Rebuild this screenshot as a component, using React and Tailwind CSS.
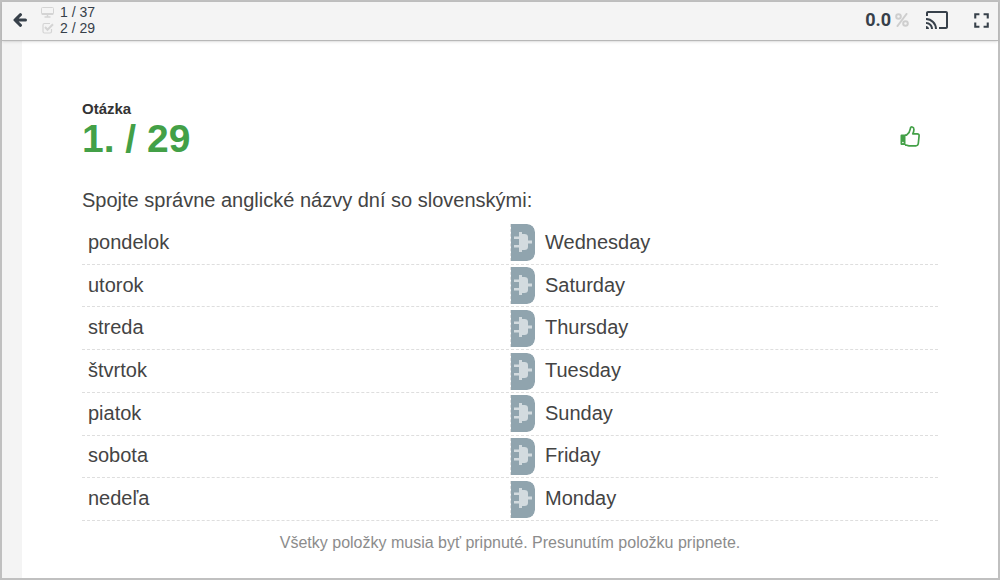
import { MdCast, MdFullscreen } from 'react-icons/md';

const pairs = [
  ['pondelok', 'Wednesday'],
  ['utorok', 'Saturday'],
  ['streda', 'Thursday'],
  ['štvrtok', 'Tuesday'],
  ['piatok', 'Sunday'],
  ['sobota', 'Friday'],
  ['nedeľa', 'Monday'],
];

function BackIcon() {
  return (
    <svg width="14" height="14" viewBox="0 0 14 14" fill="none" stroke="currentColor" strokeWidth="3">
      <path d="M7.500 1.700 2 7l5.500 5.300M3 7h9.500" strokeLinecap="round" strokeLinejoin="round" />
    </svg>
  );
}

function ScreenIcon() {
  return (
    <svg width="14" height="11" viewBox="0 0 14 11" fill="none" stroke="currentColor">
      <rect x=".5" y=".5" width="12" height="7" rx="1" />
      <path d="M1 7h11" strokeWidth="2" />
      <path d="M6.500 8v2M3.500 10h6" strokeWidth="1.500" />
    </svg>
  );
}

function CheckIcon() {
  return (
    <svg width="14" height="12" viewBox="0 0 14 12" fill="none" stroke="currentColor">
      <path
        d="M10.500 7v2.500a1.500 1.500 0 0 1-1.500 1.500H3.500A1.500 1.500 0 0 1 2 9.500V3a1.500 1.500 0 0 1 1.500-1.500H9"
        strokeWidth="1.200"
      />
      <path d="m4 5 2.500 2.700L12 2.200" strokeWidth="2" />
    </svg>
  );
}

function PercentIcon() {
  return (
    <svg width="14" height="14" viewBox="0 0 14 14" fill="none" stroke="currentColor" strokeWidth="2">
      <circle cx="3.500" cy="3.500" r="2.300" />
      <circle cx="10.500" cy="10.500" r="2.300" />
      <path d="m11.500 1-9 12" strokeLinecap="round" />
    </svg>
  );
}

function ThumbIcon() {
  return (
    <svg width="20" height="21" viewBox="0 0 20 21" fill="none" stroke="currentColor" strokeWidth="1.700">
      <path
        d="M5 9.200h1.500C8.500 7.500 10 5.500 10.300 2.800c.2-1.500 1-2.100 2-1.800 2.200.6 2 3.600.5 6.800h4.400c1.300 0 2 .8 1.900 2l-.8 7.700c-.2 1.500-1 2.300-2.500 2.300H9c-1.500 0-2.500-.8-4-1"
        strokeLinejoin="round"
      />
      <path
        d="M1.500 8.500h4V19h-4a1 1 0 0 1-1-1V9.500a1 1 0 0 1 1-1zM2.900 15.700a.8.8 0 1 0 .01 1.600.8.8 0 0 0-.01-1.600z"
        fill="currentColor"
        fillRule="evenodd"
        stroke="none"
      />
    </svg>
  );
}

function PlugIcon() {
  return (
    <svg width="19" height="20" viewBox="0 0 19 20" fill="currentColor">
      <path d="M6 0h3v2h2.500c2.200 0 3.500 1.200 3.500 3v3.500h4v3h-4V15c0 1.800-1.300 3-3.500 3H9v2H6v-4.500H1V13h5V7H1V4.500h5z" />
    </svg>
  );
}

export default function App() {
  return (
    <div className="flex min-h-screen flex-col border-2 border-[#c0c0c0] bg-white font-['Liberation_Sans',Arial,sans-serif] text-[#37404a]">
      <header className="z-10 flex h-[39px] items-center justify-between border-b border-[#b8b8b8] bg-[#f4f4f4] pr-1 pb-0.5 pl-[9px] shadow-sm">
        <div className="flex items-center gap-3">
          <button type="button" aria-label="Späť" className="p-0.5">
            <BackIcon />
          </button>
          <div className="text-sm leading-4">
            <div className="flex items-center gap-1">
              <span className="w-[15px] text-[#d4d4d4]">
                <ScreenIcon />
              </span>
              1 / 37
            </div>
            <div className="flex items-center gap-1">
              <span className="w-[15px] text-[#d4d4d4]">
                <CheckIcon />
              </span>
              2 / 29
            </div>
          </div>
        </div>

        <div className="flex items-center">
          <span className="font-[Roboto,sans-serif] text-lg font-bold">0.0</span>
          <span className="ml-1 text-[#cecece]">
            <PercentIcon />
          </span>
          <button type="button" aria-label="Prenášať" className="ml-4">
            <MdCast size={24} />
          </button>
          <button type="button" aria-label="Celá obrazovka" className="ml-5">
            <MdFullscreen size={25} />
          </button>
        </div>
      </header>

      <main className="flex-1 border-l-[20px] border-[#f4f4f4] px-15 pt-15">
        <div className="flex items-end justify-between pr-[18px]">
          <h1 className="font-bold">
            <span className="block text-[15px] leading-4 text-[#333333]">Otázka</span>
            <span className="block text-[39px] leading-11 text-[#43a047]">1. / 29</span>
          </h1>
          <button type="button" aria-label="Páči sa mi" className="pb-3.5 text-[#43a047]">
            <ThumbIcon />
          </button>
        </div>

        <p className="mt-[27px] text-xl leading-6 text-[#444444]">
          Spojte správne anglické názvy dní so slovenskými:
        </p>
        <ul className="mt-2.5 flex min-h-[299px] flex-col text-xl text-[#444444]">
          {pairs.map(([slovak, english]) => (
            <li
              key={slovak}
              className="grid flex-1 grid-cols-2 items-center border-b border-dashed border-[#dedede]"
            >
              <span className="pb-0.5 pl-1.5">{slovak}</span>
              <span className="flex items-center gap-2.5">
                <button
                  type="button"
                  aria-label={`Pripnúť ${english}`}
                  className="flex h-[37px] w-[25px] items-center rounded-r-lg border-l border-dashed border-[#e0e0e0] bg-[#90a4ae] bg-clip-padding pb-0.5 pl-0.5 text-[#d3dbdf]"
                >
                  <PlugIcon />
                </button>
                <span className="pb-0.5">{english}</span>
              </span>
            </li>
          ))}
        </ul>
        <p className="mt-3 text-center text-base leading-5 text-[#8c8c8c]">
          Všetky položky musia byť pripnuté. Presunutím položku pripnete.
        </p>
      </main>
    </div>
  );
}
